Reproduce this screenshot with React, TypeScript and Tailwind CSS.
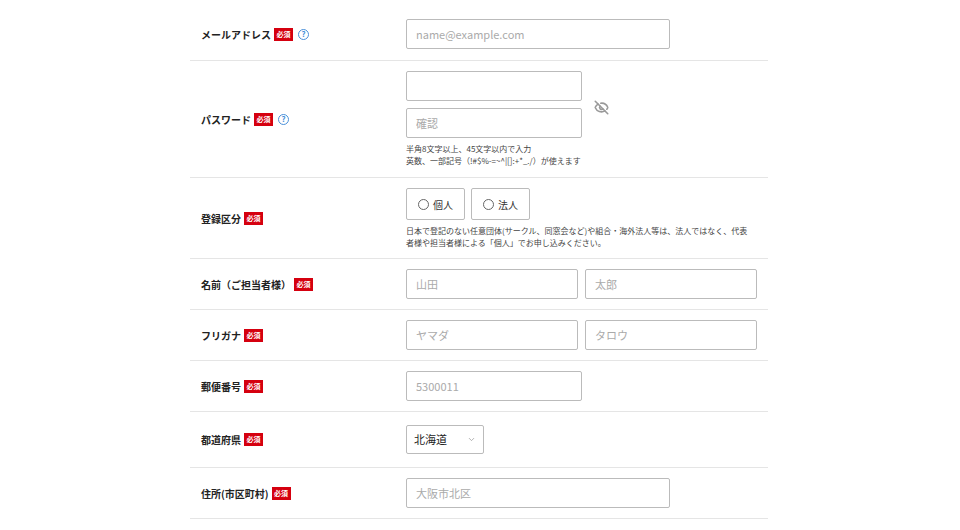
import React from "react";
import { EyeOff, ChevronDown } from "lucide-react";

const Badge = () => (
  <span className="inline-flex items-center justify-center bg-[#d5000f] text-white text-[7px] font-bold w-[19px] h-[13px] leading-none ml-[3px]">必須</span>
);
const Help = () => (
  <span className="inline-flex items-center justify-center w-[11px] h-[11px] rounded-full border border-[#4a90d9] text-[#4a90d9] text-[8px] leading-none ml-[5px]">?</span>
);

const Input = ({ ph, w }: { ph?: string; w: string }) => (
  <input placeholder={ph} className={`${w} h-[30px] border border-[#bbb] rounded-[2px] px-[9px] text-[11px] placeholder-[#aaa] outline-none`} />
);

const Row = ({ label, help, py, children }: any) => (
  <div className={`flex border-b border-[#e5e5e5] ${py}`}>
    <div className="w-[216px] pl-[11px] flex items-center text-[10px] font-bold text-[#222]">
      <span>{label}</span>
      <Badge />
      {help && <Help />}
    </div>
    <div className="flex-1">{children}</div>
  </div>
);

export default function App() {
  return (
    <div className="w-[960px] h-[530px] bg-white overflow-hidden" style={{ fontFamily: '"Noto Sans CJK JP", "Noto Sans", sans-serif' }}>
      <div className="ml-[190px] w-[578px]">
        <Row label="メールアドレス" help py="pt-[19px] pb-[11px]">
          <Input ph="name@example.com" w="w-[264px]" />
        </Row>
        <Row label="パスワード" help py="py-[10px]">
          <div className="flex items-center">
            <div className="flex flex-col gap-[7px]">
              <Input w="w-[176px]" />
              <Input ph="確認" w="w-[176px]" />
            </div>
            <EyeOff size={15} strokeWidth={2.5} className="text-[#999] ml-[12px] mt-[6px]" />
          </div>
          <div className="mt-[5px] text-[8px] leading-[12px] text-[#444]">
            <div>半角8文字以上、45文字以内で入力</div>
            <div>英数、一部記号（!#$%-=~^|[]:+*_./）が使えます</div>
          </div>
        </Row>
        <Row label="登録区分" py="pt-[10px] pb-[9px]">
          <div className="flex gap-[6px]">
            {["個人", "法人"].map((t) => (
              <div key={t} className="w-[59px] h-[32px] border border-[#bbb] rounded-[2px] flex items-center justify-center gap-[4px] text-[10px] text-[#333]">
                <span className="w-[11px] h-[11px] rounded-full border border-[#666]" />
                {t}
              </div>
            ))}
          </div>
          <div className="mt-[5px] text-[8px] leading-[12px] text-[#444] pr-[16px]">
            日本で登記のない任意団体(サークル、同窓会など)や組合・海外法人等は、法人ではなく、代表者様や担当者様による「個人」でお申し込みください。
          </div>
        </Row>
        <Row label="名前（ご担当者様）" py="py-[10px]">
          <div className="flex gap-[7px]">
            <Input ph="山田" w="w-[172px]" />
            <Input ph="太郎" w="w-[172px]" />
          </div>
        </Row>
        <Row label="フリガナ" py="py-[10px]">
          <div className="flex gap-[7px]">
            <Input ph="ヤマダ" w="w-[172px]" />
            <Input ph="タロウ" w="w-[172px]" />
          </div>
        </Row>
        <Row label="郵便番号" py="py-[10px]">
          <Input ph="5300011" w="w-[176px]" />
        </Row>
        <Row label="都道府県" py="py-[13px]">
          <div className="w-[78px] h-[29px] border border-[#bbb] rounded-[2px] flex items-center justify-between px-[7px] text-[11px] text-[#222]">
            北海道
            <ChevronDown size={9} className="text-[#999]" />
          </div>
        </Row>
        <Row label="住所(市区町村)" py="py-[10px]">
          <Input ph="大阪市北区" w="w-[264px]" />
        </Row>
      </div>
    </div>
  );
}
